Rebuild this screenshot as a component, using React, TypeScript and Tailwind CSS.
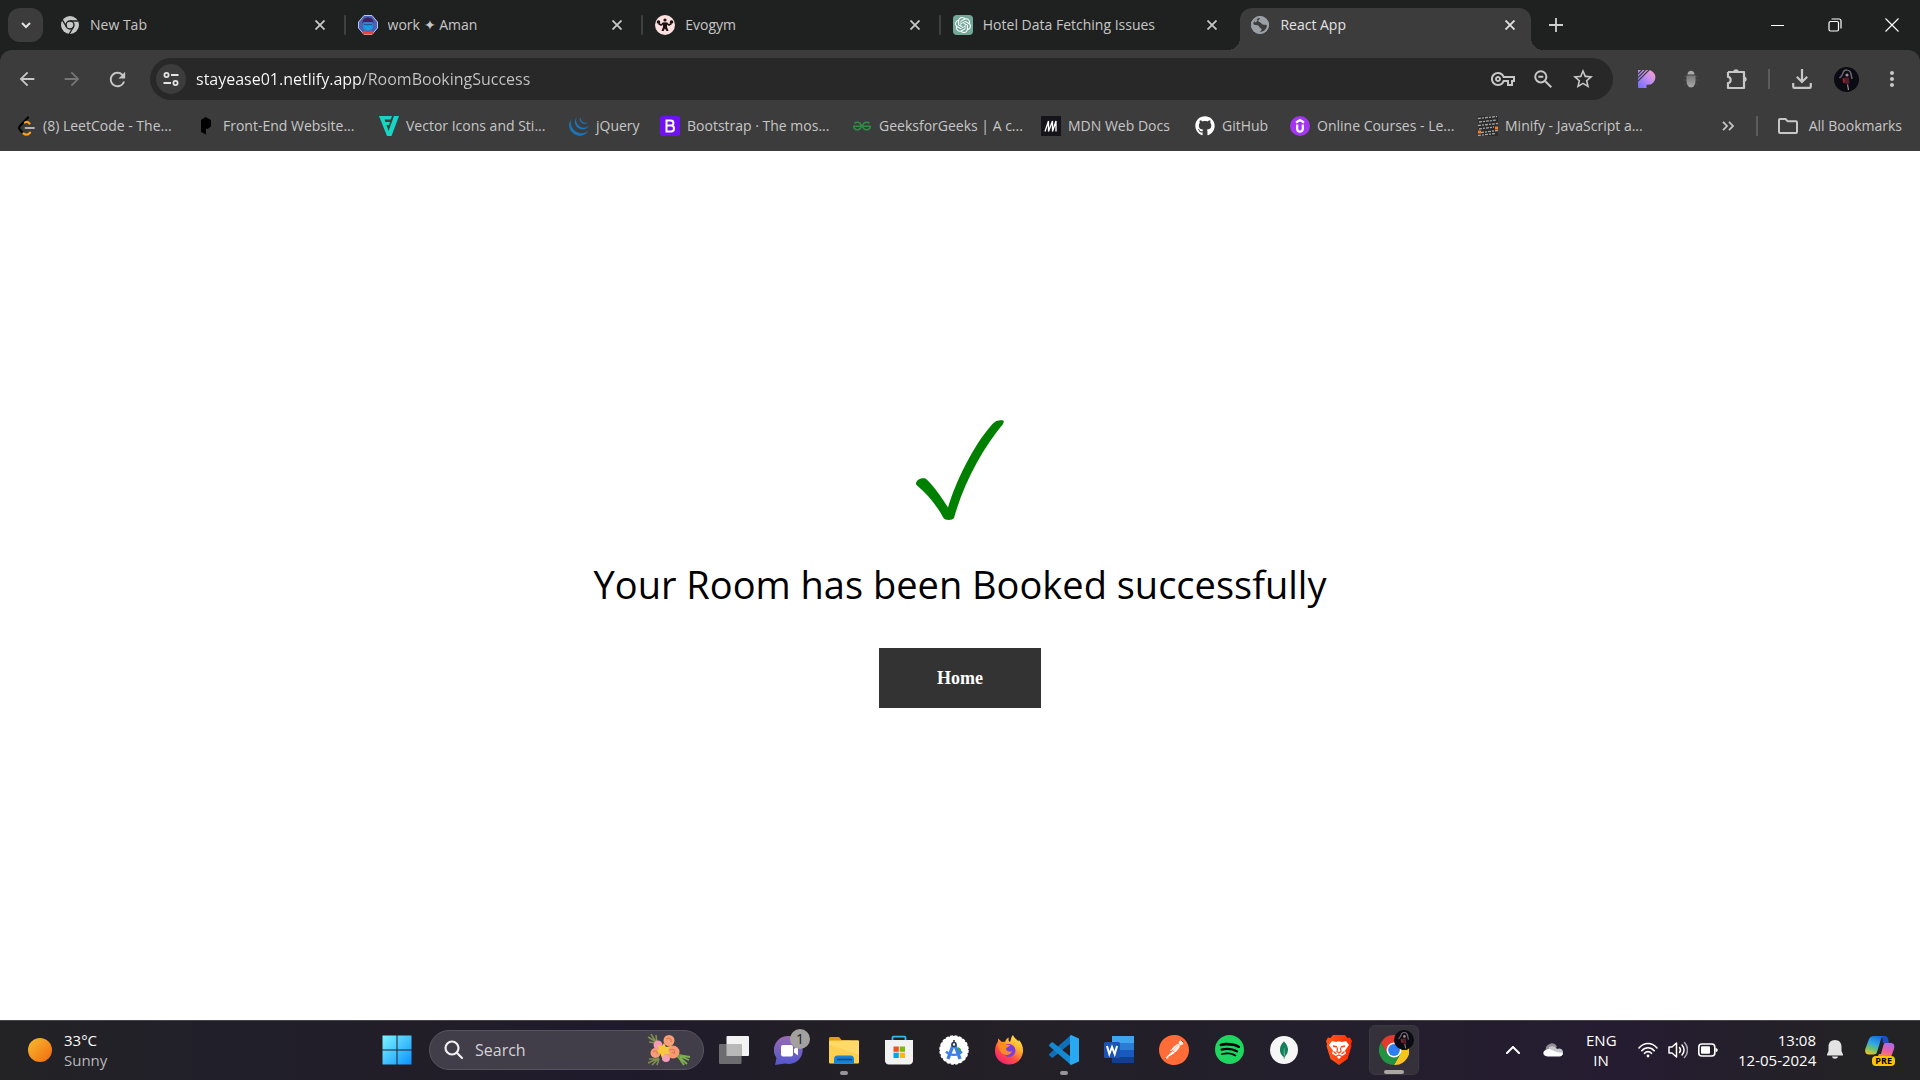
import type { ReactNode } from "react";
import { SiSpotify, SiMongodb, SiPostman, SiOpenai, SiGeeksforgeeks, SiJquery } from "react-icons/si";
import { FaGithub } from "react-icons/fa";
import { MdArrowBack, MdArrowForward, MdRefresh, MdOutlineVpnKey, MdStarBorder, MdMoreVert } from "react-icons/md";

/* ---------- Browser icons ---------- */

const ChromeMono = () => (
  <svg viewBox="0 0 18 18" className="size-[18px]">
    <circle cx="9" cy="9" r="9" fill="#c7c7c7" />
    <circle cx="9" cy="9" r="4" fill="none" stroke="#1f2120" strokeWidth="1.4" />
    <path d="M9 5h8.5M5.6 11 1.3 3.8M12.4 11 8.2 18" stroke="#1f2120" strokeWidth="1.4" />
  </svg>
);

const WorkIcon = () => (
  <svg viewBox="0 0 20 20" className="size-5">
    <path d="M6 .5h8L19.5 7v6L14 19.5H6L.5 13V7z" fill="#4a62b8" stroke="#b9c6ea" />
    <path d="M4.500 8.500c-1-8 12-8 11 0l-1-1.500H6z" fill="#45205e" />
    <path d="M5.500 7.500h9v5c0 4-9 4-9 0z" fill="#1d9be0" />
    <path d="M6 9.500h8" stroke="#175a9c" strokeWidth="1.400" />
    <path d="M4.500 18c1-3 3-2 5.500-1 2.500-1 4.500-2 5.500 1l-1.500 1.500H6z" fill="#e8473f" />
  </svg>
);

const EvogymIcon = () => (
  <svg viewBox="0 0 20 20" className="size-5">
    <circle cx="10" cy="10" r="10" fill="#fde0e0" />
    <circle cx="10" cy="5" r="1.600" fill="#1c1010" />
    <path d="M3.500 8.500 6 10l2-1.500h4L14 10l2.500-1.500" stroke="#1c1010" strokeWidth="1.500" fill="none" />
    <path d="M7.500 7.500h5L12 12l1.500 4h-2L10 13.500 8.500 16h-2L8 12z" fill="#1c1010" />
    <circle cx="3.500" cy="7" r="1.800" fill="#1c1010" />
    <circle cx="16.500" cy="7" r="1.800" fill="#1c1010" />
  </svg>
);

const OpenAiIcon = () => (
  <span className="flex size-5 items-center justify-center rounded-sm bg-[#74a99a] text-white">
    <SiOpenai className="size-4" />
  </span>
);

const GlobeIcon = () => (
  <svg viewBox="0 0 18 18" className="size-[18px]">
    <circle cx="9" cy="9" r="9" fill="#9aa0a6" />
    <path d="M10 1.500c-2 1-1.500 2.500-3 3.500 1 1.500 3 1 3.500 2.500C11 9.500 14 8 16 9.500c.5 2-1 4-3 5.500-1 1-3 1-4 1.500.5-2 2-2 1.500-3.500-.5-1.200-2.500-1-2.500-3C6 8.500 3.500 9.500 2 8c0-3 3.500-6.500 8-6.500z" fill="#3c3c3c" />
    <circle cx="9" cy="9" r="8" fill="none" stroke="#9aa0a6" strokeWidth="2" />
    <path d="M11 3c1 1.500 2 2 4 2.500M6 3.500 4 6" stroke="#9aa0a6" strokeWidth="2" />
  </svg>
);

const CloseIcon = () => (
  <svg viewBox="0 0 10 10" className="size-[10px]" stroke="currentColor" strokeWidth="1.800">
    <path d="M.5.5l9 9M9.500.5l-9 9" />
  </svg>
);

const SiteSettingsIcon = () => (
  <svg viewBox="0 0 16 14" className="h-[14px] w-4" fill="none" stroke="currentColor" strokeWidth="1.800">
    <circle cx="3.500" cy="3" r="2.100" />
    <path d="M8 3h7.500M.5 11H8" />
    <circle cx="12.500" cy="11" r="2.100" />
  </svg>
);

const ZoomOutIcon = () => (
  <svg viewBox="0 0 18 18" className="size-[18px]" fill="none" stroke="currentColor" strokeWidth="2">
    <circle cx="6.800" cy="6.800" r="5.600" />
    <path d="M11 11l6.300 6.300M4.300 6.800h5" />
  </svg>
);

const PurplePIcon = () => (
  <svg viewBox="0 0 18 18" className="size-[18px]">
    <defs>
      <linearGradient id="pg" x1="0" y1="1" x2="1" y2="0">
        <stop offset="0" stopColor="#6a6bff" />
        <stop offset=".55" stopColor="#c38df0" />
        <stop offset="1" stopColor="#ffa3c4" />
      </linearGradient>
    </defs>
    <path d="M0 0h10a7.300 7.300 0 0 1 0 14.800H8.500V18H0z" fill="url(#pg)" />
    <path d="M0 4 4 0M0 7.500 7.500 0M0 11 11 0" stroke="#3c3c3c" strokeWidth="1.200" />
  </svg>
);

const BugIcon = () => (
  <svg viewBox="0 0 18 18" className="size-[18px]">
    <defs>
      <linearGradient id="bug" x1="0" y1="0" x2="0" y2="1">
        <stop offset="0" stopColor="#777" />
        <stop offset="1" stopColor="#aaa" />
      </linearGradient>
    </defs>
    <path d="M2 6l3 1M16 6l-3 1M1 10h4M17 10h-4M2 15l3-2M16 15l-3-2" stroke="#4c4c4c" />
    <path d="M5.500 4.500C5.500-.5 12.500-.5 12.500 4.500z" fill="#aaa" />
    <path d="M4.500 5.500h9v5c0 3.500-1.500 7-4.500 7s-4.500-3.500-4.500-7z" fill="url(#bug)" />
  </svg>
);

const PuzzleIcon = () => (
  <svg viewBox="0 0 22 22" className="size-[22px]" fill="none" stroke="currentColor" strokeWidth="2.200" strokeLinejoin="round">
    <path d="M2 4h5.500M12.500 4H18v5M18 13.500V20H2v-5c3.500 0 3.500-6 0-6V4" />
    <path d="M7 4.500c0-4.300 6-4.300 6 0zM17.500 8.500c4.300 0 4.300 5.500 0 5.500z" fill="currentColor" stroke="none" />
    <path d="M7 4h6M18 8v6" />
  </svg>
);

const DownloadIcon = () => (
  <svg viewBox="0 0 20 20" className="size-5" fill="none" stroke="currentColor" strokeWidth="2.200">
    <path d="M10 0v12.500M4.800 7.800 10 13l5.200-5.200M1.200 14v3.500c0 1 .5 1.400 1.300 1.400h15c.8 0 1.300-.5 1.300-1.400V14" />
  </svg>
);

const Avatar = ({ className }: { className: string }) => (
  <svg viewBox="0 0 25 25" className={className}>
    <circle cx="12.500" cy="12.500" r="12.500" fill="#0b0b14" />
    <path d="M9 6c1-4 7-4 8 1l1 5M9.500 5 7.500 9l-2 2" stroke="#6f6470" strokeWidth="1.500" fill="none" />
    <circle cx="13" cy="8" r="1.600" fill="#a88f8c" />
    <path d="M11 10.500h4l.5 6-2.500 1-2.500-1.500z" fill="#50202c" />
    <path d="M8.500 11.500l2-1 .5 5-2 .5z" fill="#a3202c" />
    <path d="M13.500 17.500l1 5.500" stroke="#a88f8c" strokeWidth="1.200" />
  </svg>
);

/* ---------- Bookmark icons ---------- */

const LeetCodeIcon = () => (
  <svg viewBox="0 0 20 20" className="size-5" fill="none" strokeWidth="2.200" strokeLinecap="round">
    <path d="M12 1.500 4 10c-1.200 1.300-1.200 2.500 0 3.800L7 17" stroke="#000" />
    <path d="M9 6.500c1.500-1.200 3-.8 4.500 1M7.500 17.500c2 1.500 4.500 1.500 6.500-.8" stroke="#ffa116" />
    <path d="M9.500 12H18" stroke="#b3b3b3" strokeWidth="1.800" />
  </svg>
);

const BlackPIcon = () => (
  <svg viewBox="0 0 20 20" className="size-5">
    <path d="M5 4 9.500 1l5.500 3v6.500L11.500 13 10 12.500v6L5 16z" fill="#000" />
  </svg>
);

const VectorIcon = () => (
  <svg viewBox="0 0 20 20" className="size-5">
    <path d="M0 0h13l-1.300 3.500H5.500L6.500 6H11l-1 3H7.500l2 6L15 0h5l-7.500 20H8z" fill="#16d5c5" />
  </svg>
);

const BootstrapIcon = () => (
  <svg viewBox="0 0 20 20" className="size-5">
    <rect width="20" height="20" rx="2.500" fill="#7010f5" />
    <path d="M6.500 4.500h4.200c3.600 0 3.600 5 .3 5H6.500zm0 5H11c4 0 4 6 0 6H6.500z" fill="none" stroke="#fff" strokeWidth="2" />
  </svg>
);

const MdnIcon = () => (
  <svg viewBox="0 0 20 20" className="size-5">
    <rect width="20" height="20" fill="#15141a" />
    <path d="M4 15.500 7.500 5v10.500L11.500 5v10.500L15 5v10.500" stroke="#fff" strokeWidth="1.300" fill="none" />
  </svg>
);

const UdemyIcon = () => (
  <svg viewBox="0 0 20 20" className="size-5">
    <circle cx="10" cy="10" r="10" fill="#a435f0" />
    <path d="M6 6.500 10 4l4 2.500M7.200 8.500v4.200c0 4 5.600 4 5.600 0V8.500" stroke="#fff" strokeWidth="2.200" fill="none" />
  </svg>
);

const MinifyIcon = () => (
  <svg viewBox="0 0 20 20" className="size-5">
    <rect width="20" height="20" fill="#2b2b2b" />
    <path d="M0 2.500 19 .5M1 6l18-2M0 9.500 20 7.500M1 13l15-2M3 16.500l17-2M0 19.500l18-2" stroke="#a8a8a8" strokeWidth="1.300" strokeDasharray="3 1 2 1" />
    <path d="M0 16h3M17 12h3" stroke="#ff7a1a" strokeWidth="3" />
  </svg>
);

const FolderIcon = () => (
  <svg viewBox="0 0 20 16" className="h-4 w-5" fill="none" stroke="currentColor" strokeWidth="2" strokeLinejoin="round">
    <path d="M2 1h5.500l2 2.200H18c.6 0 1 .4 1 1V14c0 .6-.4 1-1 1H2c-.6 0-1-.4-1-1V2c0-.6.4-1 1-1z" />
  </svg>
);

/* ---------- Taskbar icons ---------- */

const WindowsIcon = () => (
  <svg viewBox="0 0 30 30" className="size-[30px]">
    <defs>
      <linearGradient id="win" x1="0" y1="0" x2="1" y2="1" gradientUnits="objectBoundingBox">
        <stop offset="0" stopColor="#7ef4ff" />
        <stop offset="1" stopColor="#0a93ff" />
      </linearGradient>
    </defs>
    <path d="M.5.5h14v14H.5zM15.500.5h14v14h-14zM.5 15.500h14v14H.5zM15.500 15.500h14v14h-14z" fill="url(#win)" />
  </svg>
);

const BouquetIcon = () => (
  <svg viewBox="0 0 44 32" className="h-8 w-11 shrink-0">
    <path d="M1 3l10 6M4 0l5 8M9 1l1 8M2 8l7 1" stroke="#7f8f4e" strokeWidth="1.600" />
    <path d="M1 29l11-5M2 25l9 0M5 31l6-6M10 31l2-6" stroke="#7f8f4e" strokeWidth="1.600" />
    <path d="M30 21l13 2M30 21l12 5M30 21l10 9M30 21l7 10" stroke="#7fae4e" strokeWidth="1.800" />
    <path d="M22 9l6 5-4 3zM28 22l6-2-2 5z" fill="#6d9a49" />
    <circle cx="11" cy="11" r="4.500" fill="#f59ab4" />
    <circle cx="22" cy="6.500" r="5.500" fill="#f6a07a" />
    <circle cx="8.500" cy="19" r="5" fill="#f59c7a" />
    <circle cx="19" cy="24" r="4" fill="#f79fba" />
    <circle cx="26" cy="18" r="6.500" fill="#f59a74" />
    <path d="M17 9l2 4 5-1-3 4 2 4-5 0-3 4-2-5-5-1 4-3-1-4 4 1z" fill="#f6c93f" />
    <path d="M23 16c3-2 6 1 4 4M25 18l2 1M19 5c3-2 6 0 5 3M6 18c2-2 5-1 4 2" stroke="#e07c58" strokeWidth="1.200" fill="none" />
  </svg>
);

const TaskViewIcon = () => (
  <svg viewBox="0 0 30 30" className="size-[30px]">
    <rect x="7.500" y="1" width="22.500" height="20" rx="1" fill="#f3f3f3" />
    <rect x="0" y="9" width="22.500" height="20" rx="1" fill="#6d6d70" />
    <rect x="7.500" y="9" width="15" height="12" fill="#b9b9ba" />
  </svg>
);

const ChatIcon = () => (
  <svg viewBox="0 0 30 30" className="size-[30px]">
    <defs>
      <linearGradient id="chat" x1="0" y1="0" x2="0" y2="1">
        <stop offset="0" stopColor="#9a6bb0" />
        <stop offset="1" stopColor="#5157cf" />
      </linearGradient>
    </defs>
    <path d="M15 1a14 14 0 1 1-4 27.500L1 30l1.500-7A14 14 0 0 1 15 1z" fill="url(#chat)" />
    <rect x="7" y="10" width="12" height="11.500" rx="2" fill="#fff" />
    <path d="M20 14l4-3v9.500l-4-3z" fill="#fff" />
  </svg>
);

const ExplorerIcon = () => (
  <svg viewBox="0 0 30 30" className="size-[30px]">
    <path d="M0 3.500C0 2.500.7 2 1.500 2H10l3 3.500h8V12H0z" fill="#e0a00c" />
    <rect y="5.500" width="30" height="23" rx="1" fill="#ffd04d" />
    <path d="M0 9V6.500h11l2.500-1H29a1 1 0 0 1 1 1V20z" fill="#ffda68" />
    <path d="M5 28.500V24c0-2.200 1.200-3.500 3.500-3.500h13c2.300 0 3.500 1.300 3.500 3.500v4.500z" fill="#1383d6" />
    <path d="M8 24.500h15" stroke="#0a4f92" strokeWidth="1.800" />
  </svg>
);

const StoreIcon = () => (
  <svg viewBox="0 0 30 30" className="size-[30px]">
    <path d="M8.500 6V2.500c0-.6.3-.9.9-.9h11.200c.6 0 .9.3.9.900V6" fill="none" stroke="#33b8f2" strokeWidth="1.800" />
    <path d="M1 5h28v20a4 4 0 0 1-4 4.500H5A4 4 0 0 1 1 25z" fill="#f2f2f2" />
    <path d="M9.500 11.500h5.300v5.300H9.500z" fill="#f25022" />
    <path d="M15.700 11.500H21v5.300h-5.300z" fill="#7fba00" />
    <path d="M9.500 17.700h5.300V23H9.500z" fill="#00a4ef" />
    <path d="M15.700 17.700H21V23h-5.300z" fill="#ffb900" />
  </svg>
);

const AndroidStudioIcon = () => (
  <svg viewBox="0 0 30 30" className="size-[30px]">
    <circle cx="15" cy="15" r="14" fill="#fff" stroke="#fff" strokeWidth="1.500" strokeDasharray="3 1.400" />
    <path d="M19 12a5 5 0 0 1 3 6l-4 0z" fill="#2f9e5b" />
    <path d="M14.500 9 9 24M15.500 9 21 24" stroke="#3f7fe8" strokeWidth="3.400" />
    <path d="M7 16.500c4 4.500 12 4.500 16 0" stroke="#3f7fe8" strokeWidth="2.200" fill="none" />
    <circle cx="15" cy="9.500" r="2" fill="#fff" stroke="#273a4b" strokeWidth="1.600" />
    <path d="M15 5v3" stroke="#273a4b" strokeWidth="1.600" />
  </svg>
);

const FirefoxIcon = () => (
  <svg viewBox="0 0 30 30" className="size-[30px]">
    <defs>
      <linearGradient id="ff" x1=".85" y1="0" x2=".2" y2="1">
        <stop offset="0" stopColor="#fff14a" />
        <stop offset=".35" stopColor="#ffb02e" />
        <stop offset=".65" stopColor="#ff4f45" />
        <stop offset="1" stopColor="#f01a78" />
      </linearGradient>
    </defs>
    <path d="M19 0c1 3 3.500 4 5.500 6.500.3-.8.200-1.300 0-2 3.500 3.500 5 8.500 4.500 12.500C28 24.500 22.500 29.500 15 29.500S1 24 1 16c0-4 1-7 3-9.500V3.500L8 7c1-.3 2-.3 3 0 1-3 2.500-4 4-4.500-1 2-.5 3.500 1 4.500 1-2.500 1-5 3-7z" fill="url(#ff)" />
    <circle cx="15" cy="15.500" r="6.500" fill="#7a3ee0" />
    <path d="M4 9c3-2 6-2 8 1h4c0 2-4 2-4 4 1 3 4 3 6 2-1 4-6 5-9 3-3-2-5-6-5-10z" fill="#ff8a2a" />
  </svg>
);

const VsCodeIcon = () => (
  <svg viewBox="0 0 30 30" className="size-[30px]">
    <path d="M22 0v8L4 22.500c-.5.400-1 .400-1.400 0L.4 20.500c-.5-.5-.5-1.200 0-1.700z" fill="#0f6fb8" />
    <path d="M22 30v-8L4 7.500c-.5-.400-1-.400-1.400 0L.4 9.500c-.5.5-.5 1.200 0 1.700z" fill="#1588d2" />
    <path d="M22 0 30 3.500v23L22 30l-1-1V1z" fill="#29a9f2" />
  </svg>
);

const WordIcon = () => (
  <svg viewBox="0 0 30 30" className="size-[30px]">
    <path d="M8 1h22v7H8z" fill="#41a5ee" />
    <path d="M8 8h22v7H8z" fill="#2b7cd3" />
    <path d="M8 15h22v7H8z" fill="#185abd" />
    <path d="M8 22h22v6H8z" fill="#103f91" />
    <rect y="7" width="16" height="16" rx="1.500" fill="#1a55b5" />
    <path d="M3 11l2.300 8L8 12l2.700 7L13 11" stroke="#fff" strokeWidth="2" fill="none" />
  </svg>
);

const PostmanIcon = () => (
  <span className="flex size-[30px] rounded-full bg-[radial-gradient(circle,#fff_12px,transparent_12px)] text-[#ff6c37]">
    <SiPostman className="size-[30px] shrink-0" />
  </span>
);

const SpotifyIcon = () => (
  <span className="flex size-[29px] rounded-full bg-[radial-gradient(circle,#000_12px,transparent_12px)] text-[#1ed760]">
    <SiSpotify className="size-[29px]" />
  </span>
);

const MongoIcon = () => (
  <span className="flex size-7 items-center justify-center rounded-full bg-[#f6f6f6] text-[#12805a]">
    <SiMongodb className="size-[18px]" />
  </span>
);

const BraveIcon = () => (
  <svg viewBox="0 0 30 30" className="size-[30px]">
    <defs>
      <linearGradient id="brave" x1="0" y1="0" x2="1" y2="0">
        <stop offset="0" stopColor="#ff5a1f" />
        <stop offset="1" stopColor="#ff2b00" />
      </linearGradient>
    </defs>
    <path d="M9 0h12l2.500 3 2.500-.5L28 6l-1 3 .5 2-4 13L15 30l-8.500-6-4-13L3 9 2 6l2-3.500 2.500.5z" fill="url(#brave)" />
    <path d="M8 6l4 1 3-.8L18 7l4-1 3 4-4 5.500 1 3-4 2.500-3 3-3-3-4-2.500 1-3-4-5.500z" fill="#fff" />
    <path d="M9 11l4 1M21 11l-4 1" stroke="#fb4415" strokeWidth="1.500" />
    <path d="M13.500 12.500l-.5 4 2 1.500 2-1.500-.5-4M9.500 16.500l3 2.500M20.500 16.500l-3 2.500M12 21.500l3-1.500 3 1.500" stroke="#fb4415" strokeWidth="1.200" fill="none" />
  </svg>
);

const ChromeIcon = () => (
  <svg viewBox="0 0 30 30" className="size-[30px]">
    <path d="M15 15H28.500V7.500A15 15 0 0 1 15 30L21.500 18.500z" fill="#fcc31e" />
    <path d="M15 15 21.500 18.800 15 30A15 15 0 0 1 2 7.500L8.500 18.800z" fill="#229342" />
    <path d="M15 7.500H28A15 15 0 0 0 2 7.500l6.500 11.300z" fill="#e33b2e" />
    <circle cx="15" cy="15" r="7.500" fill="#fff" />
    <circle cx="15" cy="15" r="5.900" fill="#2d7ff0" />
  </svg>
);

const CloudIcon = () => (
  <svg viewBox="0 0 20 14" className="h-[14px] w-5">
    <path d="M3 8a6 6 0 0 1 11-4.500l-5 5z" fill="#8f8c95" />
    <path d="M6 4c4-2 7 0 8 2a4 4 0 0 1 6 4c0 1-.5 2-1 2.500L6 6z" fill="#c7c6ca" />
    <path d="M4 6.500c2-1 4 0 6 1s5 2 9.500 2.500c.5 2-1 3.500-3 3.500h-12C-1 13-1 7.500 4 6.500z" fill="#fff" />
  </svg>
);

const WifiIcon = () => (
  <svg viewBox="0 0 20 16" className="h-4 w-5" fill="none" stroke="#fff" strokeWidth="1.600" strokeLinecap="round">
    <path d="M1 6c5-6 13-6 18 0M3.800 8.700c3.500-4 9-4 12.400 0M6.500 11.300c2-2.200 5-2.200 7 0" />
    <circle cx="10" cy="14" r="1.400" fill="#fff" stroke="none" />
  </svg>
);

const VolumeIcon = () => (
  <svg viewBox="0 0 20 18" className="h-[18px] w-5" fill="none" stroke="#fff" strokeWidth="1.500" strokeLinecap="round" strokeLinejoin="round">
    <path d="M1 6h3l4.500-4v14L4 12H1zM11.500 6.500c1.200 1.500 1.200 3.500 0 5M14 4c2.500 3 2.500 7 0 10" />
    <path d="M16.500 1.500c4 4.500 4 10.500 0 15" opacity=".6" />
  </svg>
);

const BatteryIcon = () => (
  <svg viewBox="0 0 20 14" className="h-[14px] w-5">
    <rect x=".8" y="1" width="16" height="12" rx="3" fill="none" stroke="#fff" strokeWidth="1.600" />
    <rect x="3" y="3.200" width="9" height="7.600" rx="1" fill="#fff" />
    <path d="M17.500 5c3 0 3 4 0 4z" fill="#fff" />
  </svg>
);

const BellIcon = () => (
  <svg viewBox="0 0 16 19" className="h-[19px] w-4" fill="#e4e3e3">
    <path d="M8 0c4 0 6.500 2.800 6.500 6.500v4.500L16 14.500c.2.700-.1 1-.7 1H.7c-.6 0-.9-.3-.7-1L1.500 11V6.500C1.500 2.800 4 0 8 0zM5 16.500h6c-.5 3-5.500 3-6 0z" />
  </svg>
);

const CopilotIcon = () => (
  <svg viewBox="0 0 30 30" className="size-[30px]">
    <defs>
      <linearGradient id="cpa" x1=".6" y1="0" x2=".2" y2="1">
        <stop offset="0" stopColor="#1a6fe0" />
        <stop offset=".4" stopColor="#2fa7e8" />
        <stop offset=".7" stopColor="#6fc26a" />
        <stop offset="1" stopColor="#f5c22b" />
      </linearGradient>
      <linearGradient id="cpb" x1=".8" y1="0" x2=".3" y2="1">
        <stop offset="0" stopColor="#a66cf0" />
        <stop offset=".5" stopColor="#e85fa8" />
        <stop offset="1" stopColor="#ff8a4a" />
      </linearGradient>
    </defs>
    <path d="M17 1h3c1.500 0 2.500 1 3 2.500L24 8h-6z" fill="#1d4fc4" />
    <path d="M9 1h10c-2 .5-2.800 2-3.300 4L12 17c-.5 1.800-1.500 2.500-3.500 2.500H4c-3.500 0-4.500-2.500-3.500-6L4 4c1-2 2.500-3 5-3z" fill="url(#cpa)" />
    <path d="M20 8h5c4 0 5 2 4 6l-3 8H10c2 0 3.500-1 4-3h2l2.500-9c.3-1.200.8-1.800 1.500-2z" fill="url(#cpb)" />
  </svg>
);

/* ---------- Data ---------- */

const tabs: { title: string; icon: ReactNode; active?: boolean }[] = [
  { title: "New Tab", icon: <ChromeMono /> },
  { title: "work ✦ Aman", icon: <WorkIcon /> },
  { title: "Evogym", icon: <EvogymIcon /> },
  { title: "Hotel Data Fetching Issues", icon: <OpenAiIcon /> },
  { title: "React App", icon: <GlobeIcon />, active: true },
];

const bookmarks: { title: string; icon: ReactNode; width: string }[] = [
  { title: "(8) LeetCode - The...", icon: <LeetCodeIcon />, width: "w-[160px]" },
  { title: "Front-End Website...", icon: <BlackPIcon />, width: "w-[163px]" },
  { title: "Vector Icons and Sti...", icon: <VectorIcon />, width: "w-[170px]" },
  { title: "jQuery", icon: <SiJquery className="size-5 text-[#1b74b8]" />, width: "w-[71px]" },
  { title: "Bootstrap · The mos...", icon: <BootstrapIcon />, width: "w-[172px]" },
  { title: "GeeksforGeeks | A c...", icon: <SiGeeksforgeeks className="size-[18px] text-[#2f8d46]" />, width: "w-[169px]" },
  { title: "MDN Web Docs", icon: <MdnIcon />, width: "w-[134px]" },
  { title: "GitHub", icon: <FaGithub className="size-5 text-white" />, width: "w-[75px]" },
  { title: "Online Courses - Le...", icon: <UdemyIcon />, width: "w-[168px]" },
  { title: "Minify - JavaScript a...", icon: <MinifyIcon />, width: "w-[170px]" },
];

const apps: { name: string; icon: ReactNode; mark?: string; active?: boolean; badge?: ReactNode }[] = [
  { name: "Task View", icon: <TaskViewIcon /> },
  {
    name: "Chat",
    icon: <ChatIcon />,
    badge: (
      <span className="absolute top-1 right-1 flex size-5 items-center justify-center rounded-full bg-[#a3a19f] text-sm text-[#1d1d1d]">1</span>
    ),
  },
  { name: "File Explorer", icon: <ExplorerIcon />, mark: "w-2 bg-[#97959c]" },
  { name: "Microsoft Store", icon: <StoreIcon /> },
  { name: "Android Studio", icon: <AndroidStudioIcon /> },
  { name: "Firefox", icon: <FirefoxIcon /> },
  { name: "Visual Studio Code", icon: <VsCodeIcon />, mark: "w-2 bg-[#97959c]" },
  { name: "Word", icon: <WordIcon /> },
  { name: "Postman", icon: <PostmanIcon /> },
  { name: "Spotify", icon: <SpotifyIcon /> },
  { name: "MongoDB Compass", icon: <MongoIcon /> },
  { name: "Brave", icon: <BraveIcon /> },
  {
    name: "Google Chrome",
    icon: <ChromeIcon />,
    mark: "w-5 bg-[#a9a6a4]",
    active: true,
    badge: <Avatar className="absolute top-1 right-1 size-5" />,
  },
];

/* ---------- Sections ---------- */

function TabStrip() {
  return (
    <div className="flex h-[50px] bg-[#1f2120] text-[#c7c7c7]">
      <button aria-label="Search tabs" className="mt-2 ml-2 flex h-[34px] w-[35px] shrink-0 items-center justify-center rounded-xl bg-[#3c3c3c] text-[#e3e3e3]">
        <svg viewBox="0 0 10 7" className="h-[7px] w-[10px]" fill="none" stroke="currentColor" strokeWidth="2">
          <path d="M1 1l4 4 4-4" />
        </svg>
      </button>
      <div role="tablist" className="ml-[5px] grid w-full max-w-[1488px] grid-cols-5">
        {tabs.map((tab, i) => (
          <div
            key={tab.title}
            className={
              tab.active
                ? "relative mt-2 mr-[5px] ml-[2px] flex items-center rounded-t-xl bg-[#3c3c3c] pr-[13px] pb-2 pl-[10px] text-[#e3e3e3]"
                : "relative flex items-center pr-[18px] pl-3"
            }
          >
            {tab.active && (
              <>
                <span className="absolute bottom-0 -left-3 size-3 bg-[radial-gradient(circle_at_0_0,#1f2120_12px,#3c3c3c_12px)]" />
                <span className="absolute -right-3 bottom-0 size-3 bg-[radial-gradient(circle_at_100%_0,#1f2120_12px,#3c3c3c_12px)]" />
              </>
            )}
            <button role="tab" aria-selected={!!tab.active} className="flex min-w-0 flex-1 items-center gap-[10px] text-left text-sm">
              <span className="flex w-5 shrink-0 justify-center">{tab.icon}</span>
              <span className="truncate">{tab.title}</span>
            </button>
            <button aria-label={`Close ${tab.title}`} className="flex size-4 items-center justify-center">
              <CloseIcon />
            </button>
            {i < 3 && <span className="absolute right-0 h-5 w-[2px] rounded bg-[#3f4140]" />}
          </div>
        ))}
      </div>
      <button aria-label="New tab" className="flex w-10 shrink-0 items-center justify-center">
        <svg viewBox="0 0 14 14" className="size-[14px]" stroke="#d0d0d0" strokeWidth="1.800">
          <path d="M7 0v14M0 7h14" />
        </svg>
      </button>
      <div className="ml-auto flex shrink-0 text-white">
        <button aria-label="Minimize" className="flex w-[57px] items-center justify-center">
          <span className="h-px w-[13px] bg-white" />
        </button>
        <button aria-label="Restore" className="flex w-[57px] items-center justify-center">
          <svg viewBox="0 0 14 14" className="size-[14px]" fill="none" stroke="currentColor" strokeWidth="1.200">
            <rect x="1" y="3.500" width="9.500" height="9.500" rx="1.500" />
            <path d="M3.500 1H11a2 2 0 0 1 2 2v7.500" />
          </svg>
        </button>
        <button aria-label="Close" className="flex w-[57px] items-center justify-center">
          <svg viewBox="0 0 14 14" className="size-[14px]" stroke="currentColor" strokeWidth="1.200">
            <path d="M.5.5l13 13M13.500.5l-13 13" />
          </svg>
        </button>
      </div>
    </div>
  );
}

function Toolbar() {
  return (
    <div className="bg-[#1f2120]">
      <div className="flex h-[58px] items-center rounded-t-xl bg-[#3c3c3c] text-[#c7c7c7]">
        <button aria-label="Back" className="ml-4 shrink-0">
          <MdArrowBack className="size-[22px]" />
        </button>
        <button aria-label="Forward" className="ml-[23px] shrink-0 text-[#757575]">
          <MdArrowForward className="size-[22px]" />
        </button>
        <button aria-label="Reload" className="ml-[23px] shrink-0">
          <MdRefresh className="size-[23px]" />
        </button>
        <div className="ml-[21px] flex h-[42px] flex-1 items-center rounded-full bg-[#282828] pr-[18px] pl-[6px]">
          <button aria-label="View site information" className="flex size-[30px] shrink-0 items-center justify-center rounded-full bg-[#3c3c3c] text-[#e3e3e3]">
            <SiteSettingsIcon />
          </button>
          <input
            aria-label="Address and search bar"
            type="text"
            defaultValue="stayease01.netlify.app/RoomBookingSuccess"
            className="ml-[10px] min-w-0 flex-1 bg-[linear-gradient(90deg,#ffffff_166px,#c7c7c7_166px)] bg-clip-text text-base text-transparent outline-none"
          />
          <button aria-label="Passwords" className="shrink-0">
            <MdOutlineVpnKey className="size-6" />
          </button>
          <button aria-label="Zoom" className="ml-[19px] shrink-0">
            <ZoomOutIcon />
          </button>
          <button aria-label="Bookmark this tab" className="ml-[19px] shrink-0">
            <MdStarBorder className="size-6" />
          </button>
        </div>
        <button aria-label="Extension P" className="ml-[25px] shrink-0">
          <PurplePIcon />
        </button>
        <button aria-label="Extension Bug" className="ml-[26px] shrink-0">
          <BugIcon />
        </button>
        <button aria-label="Extensions" className="ml-[26px] shrink-0">
          <PuzzleIcon />
        </button>
        <span className="ml-[20px] h-5 w-[2px] shrink-0 bg-[#5c5c5c]" />
        <button aria-label="Downloads" className="ml-[22px] shrink-0">
          <DownloadIcon />
        </button>
        <button aria-label="Profile" className="ml-[22px] shrink-0">
          <Avatar className="size-[25px]" />
        </button>
        <button aria-label="Menu" className="mr-[16px] ml-[21px] shrink-0">
          <MdMoreVert className="size-6" />
        </button>
      </div>
    </div>
  );
}

function BookmarksBar() {
  return (
    <nav aria-label="Bookmarks" className="flex h-[43px] items-center gap-5 bg-[#3c3c3c] pb-[7px] pl-4 text-sm text-[#c7c7c7]">
      {bookmarks.map((b) => (
        <a key={b.title} href="#" className={`flex shrink-0 items-center gap-[7px] whitespace-nowrap ${b.width}`}>
          <span className="flex w-5 shrink-0 justify-center">{b.icon}</span>
          {b.title}
        </a>
      ))}
      <div className="ml-auto flex shrink-0 items-center pr-[18px]">
        <button aria-label="More bookmarks">
          <svg viewBox="0 0 12 10" className="h-[10px] w-3" fill="none" stroke="currentColor" strokeWidth="1.800">
            <path d="M1 .8 5 5 1 9.200M7 .8 11 5 7 9.200" />
          </svg>
        </button>
        <span className="ml-[22px] h-5 w-[2px] bg-[#5c5c5c]" />
        <button className="ml-5 flex items-center gap-[11px] whitespace-nowrap">
          <FolderIcon />
          All Bookmarks
        </button>
      </div>
    </nav>
  );
}

function BookingSuccess() {
  return (
    <main className="flex flex-1 flex-col items-center justify-center bg-white pb-11">
      <svg viewBox="0 0 88 100" className="h-[100px] w-[88px]" fill="#008000" aria-label="Success">
        <path d="M0 63C1 59 6 57.500 9.500 58.500 16 64 25 76 32 87.500 40 61 57 26 76 4.500 79 .5 83 0 86.500.2 88 .8 88.200 1.500 87 4 67 28 48 62 38 98c-1.500 2.500-9 2.500-10.500 0C20 84 11 74 1 65.500 0 64.500 0 64 0 63z" />
      </svg>
      <h1 className="mt-[38px] text-center text-[38px] leading-[52px] text-black">Your Room has been Booked successfully</h1>
      <button className="mt-[38px] h-[60px] w-[162px] bg-[#333333] font-['Liberation_Serif',serif] text-lg font-bold text-white">Home</button>
    </main>
  );
}

function Taskbar() {
  return (
    <footer className="flex h-[60px] items-center border-t border-[#44444a] bg-[linear-gradient(90deg,#232325_0%,#211f2a_12%,#211e28_22%,#1f1a2c_32%,#222024_45%,#231f2b_65%,#251c31_85%,#232225_96%)] pb-[2px] text-[15px] text-white">
      <button className="flex w-[372px] shrink-0 items-center gap-3 pl-7 text-left leading-5">
        <span className="size-6 rounded-full bg-linear-to-br from-[#f3bd2e] to-[#f2650e]" />
        <span>
          33°C
          <br />
          <span className="text-[#b9b8bd]">Sunny</span>
        </span>
      </button>
      <div className="flex h-full items-center gap-[5px]">
        <button aria-label="Start" className="flex size-[50px] items-center justify-center">
          <WindowsIcon />
        </button>
        <label className="ml-[2px] flex h-10 w-[275px] shrink-0 items-center rounded-full border border-[#57535f] bg-[#413d49] pr-3 pl-[14px]">
          <svg viewBox="0 0 20 20" className="size-5 shrink-0" fill="none" stroke="#f0f0f0" strokeWidth="2.200">
            <circle cx="8" cy="8" r="6.500" />
            <path d="M12.800 12.800 18 18" strokeLinecap="round" />
          </svg>
          <input type="text" aria-label="Search" placeholder="Search" className="ml-[11px] w-full min-w-0 bg-transparent text-base outline-none placeholder:text-[#d4d2d7]" />
          <BouquetIcon />
        </label>
        {apps.map((app) => (
          <button
            key={app.name}
            aria-label={app.name}
            className={`relative flex size-[50px] shrink-0 items-center justify-center rounded-md ${app.active ? "border border-[#3b3842] bg-[#34313b]" : ""}`}
          >
            {app.icon}
            {app.badge}
            {app.mark && <span className={`absolute bottom-0 h-1 rounded-full ${app.mark}`} />}
          </button>
        ))}
      </div>
      <div className="ml-auto flex shrink-0 items-center">
        <button aria-label="Show hidden icons">
          <svg viewBox="0 0 14 8" className="h-2 w-[14px]" fill="none" stroke="#fff" strokeWidth="2" strokeLinecap="round">
            <path d="M1 7l6-6 6 6" />
          </svg>
        </button>
        <button aria-label="OneDrive" className="ml-[23px]">
          <CloudIcon />
        </button>
        <button className="ml-[23px] w-[30px] text-center leading-5">
          ENG
          <br />
          IN
        </button>
        <button aria-label="Network, volume and battery" className="ml-[22px] flex items-center gap-[10px]">
          <WifiIcon />
          <VolumeIcon />
          <BatteryIcon />
        </button>
        <button className="ml-[20px] w-[78px] text-right leading-5 whitespace-nowrap">
          13:08
          <br />
          12-05-2024
        </button>
        <button aria-label="Notifications" className="ml-[11px]">
          <BellIcon />
        </button>
        <button aria-label="Copilot" className="relative mr-[25px] ml-[22px]">
          <CopilotIcon />
          <span className="absolute right-0 -bottom-px rounded-sm bg-[#ffc400] px-[3px] text-[9px] leading-[10px] font-bold text-black">PRE</span>
        </button>
      </div>
    </footer>
  );
}

export default function App() {
  return (
    <div className="flex min-h-screen flex-col font-['Open_Sans',sans-serif]">
      <header>
        <TabStrip />
        <Toolbar />
        <BookmarksBar />
      </header>
      <BookingSuccess />
      <Taskbar />
    </div>
  );
}
